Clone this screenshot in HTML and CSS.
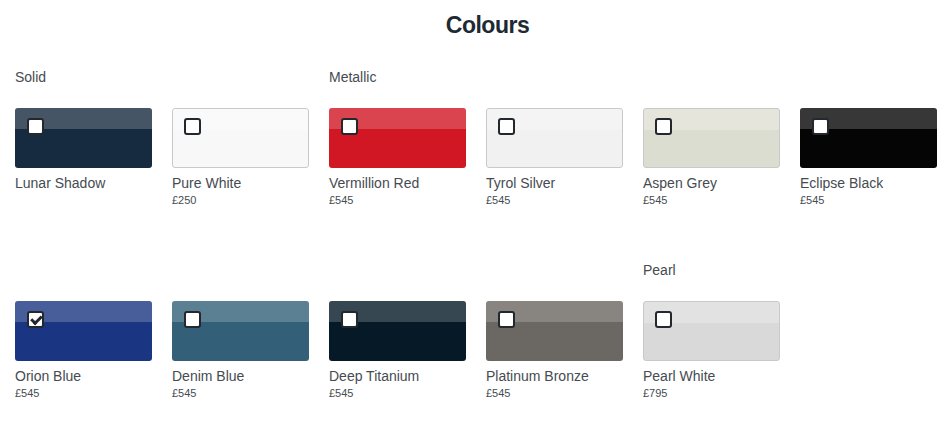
FILE: index.html
```html
<!DOCTYPE html>
<html lang="en">
<head>
    <meta charset="UTF-8">
    <meta name="viewport" content="width=device-width, initial-scale=1.0">
    <title>Colours</title>
    <link rel="stylesheet" href="styles.css">
</head>
<body>

    <h1 class="title">Colours</h1>

    <div class="colours">
        <div class="colour">
            <div class="group">Solid</div>
            <label class="swatch lunar"><input type="checkbox"><span class="box"></span></label>
            <div class="name">Lunar Shadow</div>
            <div class="price"></div>
        </div>
        <div class="colour">
            <div class="group"></div>
            <label class="swatch light pure"><input type="checkbox"><span class="box"></span></label>
            <div class="name">Pure White</div>
            <div class="price">£250</div>
        </div>
        <div class="colour">
            <div class="group">Metallic</div>
            <label class="swatch red"><input type="checkbox"><span class="box"></span></label>
            <div class="name">Vermillion Red</div>
            <div class="price">£545</div>
        </div>
        <div class="colour">
            <div class="group"></div>
            <label class="swatch light silver"><input type="checkbox"><span class="box"></span></label>
            <div class="name">Tyrol Silver</div>
            <div class="price">£545</div>
        </div>
        <div class="colour">
            <div class="group"></div>
            <label class="swatch light aspen"><input type="checkbox"><span class="box"></span></label>
            <div class="name">Aspen Grey</div>
            <div class="price">£545</div>
        </div>
        <div class="colour">
            <div class="group"></div>
            <label class="swatch black"><input type="checkbox"><span class="box"></span></label>
            <div class="name">Eclipse Black</div>
            <div class="price">£545</div>
        </div>

        <div class="colour">
            <div class="group"></div>
            <label class="swatch orion"><input type="checkbox" checked><span class="box"></span></label>
            <div class="name">Orion Blue</div>
            <div class="price">£545</div>
        </div>
        <div class="colour">
            <div class="group"></div>
            <label class="swatch denim"><input type="checkbox"><span class="box"></span></label>
            <div class="name">Denim Blue</div>
            <div class="price">£545</div>
        </div>
        <div class="colour">
            <div class="group"></div>
            <label class="swatch titanium"><input type="checkbox"><span class="box"></span></label>
            <div class="name">Deep Titanium</div>
            <div class="price">£545</div>
        </div>
        <div class="colour">
            <div class="group"></div>
            <label class="swatch bronze"><input type="checkbox"><span class="box"></span></label>
            <div class="name">Platinum Bronze</div>
            <div class="price">£545</div>
        </div>
        <div class="colour">
            <div class="group">Pearl</div>
            <label class="swatch light pearl"><input type="checkbox"><span class="box"></span></label>
            <div class="name">Pearl White</div>
            <div class="price">£795</div>
        </div>
    </div>

</body>
</html>
```

FILE: styles.css
```css
body {
    margin: 0;
    background-color: #ffffff;
    color: #464b51;
    font-family: 'Liberation Sans', Arial, sans-serif;
}
.title {
    margin: 0;
    padding: 11px 0 0 24px;
    height: 56px;
    text-align: center;
    font-size: 23px;
    line-height: 28px;
    letter-spacing: -0.5px;
    color: #1d2a33;
}
.colours {
    display: grid;
    grid-template-columns: repeat(6, 137px);
    column-gap: 20px;
    row-gap: 52px;
    padding: 0 15px;
}
.group {
    height: 20px;
    line-height: 20px;
    font-size: 14px;
    margin-bottom: 21px;
}
.swatch {
    display: block;
    position: relative;
    height: 60px;
    box-sizing: border-box;
    border-radius: 3px;
    overflow: hidden;
    cursor: pointer;
}
.swatch::before {
    content: "";
    position: absolute;
    left: 0;
    right: 0;
    top: 0;
    height: 21px;
    background-color: rgba(255, 255, 255, 0.2);
}
.swatch.light {
    border: 1px solid #c9c9c9;
}
.swatch.light::before {
    background-color: rgba(255, 255, 255, 0.25);
}
.swatch input {
    display: none;
}
.box {
    position: absolute;
    left: 12px;
    top: 10px;
    width: 17px;
    height: 17px;
    box-sizing: border-box;
    border: 2px solid #22282d;
    border-radius: 3px;
    background-color: #ffffff;
}
.swatch.light .box {
    left: 11px;
    top: 9px;
}
.swatch input:checked + .box::after {
    content: "";
    position: absolute;
    left: 2px;
    top: 1px;
    width: 8px;
    height: 4px;
    border-left: 3px solid #22282d;
    border-bottom: 3px solid #22282d;
    transform: rotate(-45deg) translate(-1px, 1px);
}
.lunar { background-color: #172b40; }
.pure { background-color: #f8f8f8; }
.red { background-color: #d11624; }
.silver { background-color: #f1f1f1; }
.aspen { background-color: #dcddd1; }
.black { background-color: #050505; }
.orion { background-color: #1a3683; }
.denim { background-color: #335f78; }
.titanium { background-color: #051a26; }
.bronze { background-color: #6b6762; }
.pearl { background-color: #d9d9d9; }
.name {
    margin-top: 6px;
    font-size: 14px;
    line-height: 18px;
}
.price {
    font-size: 11px;
    line-height: 16px;
    height: 16px;
}
```
